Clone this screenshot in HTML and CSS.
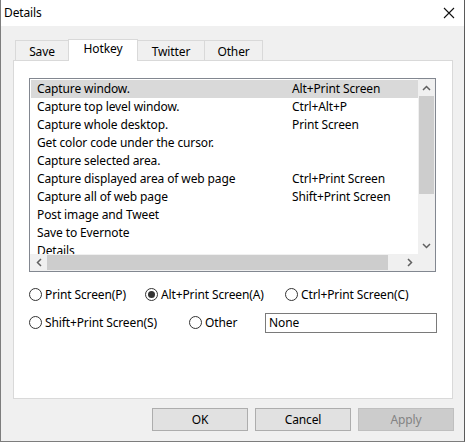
FILE: index.html
```html
<!DOCTYPE html>
<html>
<head>
<meta charset="utf-8">
<link rel="stylesheet" href="styles.css">
</head>
<body>
<div class="window">
  <div class="titlebar">
    <span class="title">Details</span>
    <svg class="close" width="12" height="12" viewBox="0 0 12 12"><path d="M1 1L11 11M11 1L1 11" stroke="#111" stroke-width="1.1" fill="none"/></svg>
  </div>
  <div class="body">
    <div class="tabs">
      <div class="tab t-save">Save</div>
      <div class="tab t-hotkey active">Hotkey</div>
      <div class="tab t-twitter">Twitter</div>
      <div class="tab t-other">Other</div>
    </div>
    <div class="panel">
      <div class="listbox">
        <div class="listmain">
          <div class="rows">
            <div class="row sel"><span class="c1">Capture window.</span><span class="c2">Alt+Print Screen</span></div>
            <div class="row"><span class="c1">Capture top level window.</span><span class="c2">Ctrl+Alt+P</span></div>
            <div class="row"><span class="c1">Capture whole desktop.</span><span class="c2">Print Screen</span></div>
            <div class="row"><span class="c1">Get color code under the cursor.</span><span class="c2"></span></div>
            <div class="row"><span class="c1">Capture selected area.</span><span class="c2"></span></div>
            <div class="row"><span class="c1">Capture displayed area of web page</span><span class="c2">Ctrl+Print Screen</span></div>
            <div class="row"><span class="c1">Capture all of web page</span><span class="c2">Shift+Print Screen</span></div>
            <div class="row"><span class="c1">Post image and Tweet</span><span class="c2"></span></div>
            <div class="row"><span class="c1">Save to Evernote</span><span class="c2"></span></div>
            <div class="row"><span class="c1">Details</span><span class="c2"></span></div>
          </div>
          <div class="vscroll">
            <div class="arrow"><svg width="9" height="6" viewBox="0 0 9 6"><path d="M1 5L4.5 1.5L8 5" stroke="#606060" stroke-width="1.5" fill="none"/></svg></div>
            <div class="vthumb"></div>
            <div class="vtrack"></div>
            <div class="arrow"><svg width="9" height="6" viewBox="0 0 9 6"><path d="M1 1L4.5 4.5L8 1" stroke="#606060" stroke-width="1.5" fill="none"/></svg></div>
          </div>
        </div>
        <div class="hbar">
          <div class="harrow"><svg width="6" height="9" viewBox="0 0 6 9"><path d="M5 1L1.5 4.5L5 8" stroke="#606060" stroke-width="1.5" fill="none"/></svg></div>
          <div class="hthumb"></div>
          <div class="htrack"></div>
          <div class="harrow"><svg width="6" height="9" viewBox="0 0 6 9"><path d="M1 1L4.5 4.5L1 8" stroke="#606060" stroke-width="1.5" fill="none"/></svg></div>
          <div class="corner"></div>
        </div>
      </div>
      <div class="radios r1">
        <label class="radio w116"><span class="dot"></span>Print Screen(P)</label>
        <label class="radio w140"><span class="dot on"></span>Alt+Print Screen(A)</label>
        <label class="radio"><span class="dot"></span>Ctrl+Print Screen(C)</label>
      </div>
      <div class="radios r2">
        <label class="radio w160"><span class="dot"></span>Shift+Print Screen(S)</label>
        <label class="radio w76"><span class="dot"></span>Other</label>
        <div class="textbox">None</div>
      </div>
    </div>
    <div class="buttons">
      <div class="btn">OK</div>
      <div class="btn">Cancel</div>
      <div class="btn disabled">Apply</div>
    </div>
  </div>
</div>
</body>
</html>
```
FILE: styles.css
```css
* { box-sizing: border-box; }
html, body { margin: 0; padding: 0; }
body {
  width: 465px;
  height: 442px;
  overflow: hidden;
  font-family: "Noto Sans", "Open Sans", sans-serif;
  font-size: 12px;
  letter-spacing: -0.12px;
  color: #000;
  background: #f0f0f0;
}
.window {
  width: 465px;
  height: 442px;
  border-left: 1px solid #7d7d7d;
  border-right: 1px solid #5a5a5a;
  border-bottom: 1px solid #7d7d7d;
  background: #f0f0f0;
  display: flex;
  flex-direction: column;
}
.titlebar {
  height: 26px;
  background: #fff;
  display: flex;
  align-items: center;
  justify-content: space-between;
  padding: 0 9px 0 3px;
}
.title { font-size: 12px; line-height: 26px; }
.close { display: block; }
.body { flex: 1; display: flex; flex-direction: column; }
.tabs {
  display: flex;
  align-items: flex-end;
  height: 22px;
  margin: 12px 0 0 14px;
}
.tab {
  height: 20px;
  border: 1px solid #d9d9d9;
  border-bottom: none;
  background: #f0f0f0;
  text-align: center;
  line-height: 20px;
  margin-right: -1px;
  padding-top: 1px;
}
.tab.active {
  height: 22px;
  background: #fff;
  margin-bottom: -1px;
  position: relative;
  z-index: 1;
  line-height: 18px;
  padding-top: 0;
}
.t-save { width: 54px; }
.t-hotkey { width: 70px; }
.t-twitter { width: 68px; }
.t-other { width: 59px; }
.panel {
  margin-left: 12px;
  width: 440px;
  height: 339px;
  background: #fff;
  border: 1px solid #d9d9d9;
  padding: 17px 0 0 15px;
}
.listbox {
  width: 407px;
  height: 194px;
  border: 1px solid #828790;
  display: flex;
  flex-direction: column;
}
.listmain { display: flex; height: 175px; }
.rows { flex: 1; padding: 1px 0 0 1px; overflow: hidden; }
.row {
  display: flex;
  height: 18px;
  line-height: 18px;
  white-space: nowrap;
}
.row.sel { background: #d9d9d9; }
.c1 { width: 261px; padding-left: 6px; }
.c2 { flex: 1; }
.vscroll {
  width: 17px;
  background: #f0f0f0;
  display: flex;
  flex-direction: column;
  align-items: center;
}
.arrow { height: 17px; display: flex; align-items: center; justify-content: center; }
.vthumb { width: 15px; height: 98px; background: #cdcdcd; }
.vtrack { flex: 1; }
.hbar {
  height: 17px;
  display: flex;
  background: #f0f0f0;
}
.harrow { width: 17px; display: flex; align-items: center; justify-content: center; }
.hthumb { width: 341px; height: 15px; margin-top: 1px; background: #cdcdcd; }
.htrack { flex: 1; }
.corner { width: 17px; background: #f0f0f0; }
.radios {
  display: flex;
  align-items: center;
}
.r1 { margin-top: 13px; height: 18px; }
.r2 { margin-top: 9px; height: 21px; }
.radio {
  display: flex;
  align-items: center;
  white-space: nowrap;
}
.w116 { width: 116px; }
.w140 { width: 140px; }
.w160 { width: 160px; }
.w76 { width: 76px; }
.dot {
  width: 13px;
  height: 13px;
  border: 1px solid #333;
  border-radius: 50%;
  margin-right: 3px;
  display: flex;
  align-items: center;
  justify-content: center;
  background: #fff;
}
.dot.on::after {
  content: "";
  width: 7px;
  height: 7px;
  border-radius: 50%;
  background: #333;
}
.textbox {
  width: 172px;
  height: 20px;
  border: 1px solid #7a7a7a;
  padding-left: 3px;
  line-height: 18px;
}
.buttons {
  display: flex;
  justify-content: flex-end;
  gap: 7px;
  margin-top: 9px;
  padding-right: 10px;
}
.btn {
  width: 96px;
  height: 23px;
  border: 1px solid #adadad;
  background: #e1e1e1;
  text-align: center;
  line-height: 21px;
}
.btn.disabled {
  background: #cccccc;
  border-color: #bfbfbf;
  color: #838383;
}
```
